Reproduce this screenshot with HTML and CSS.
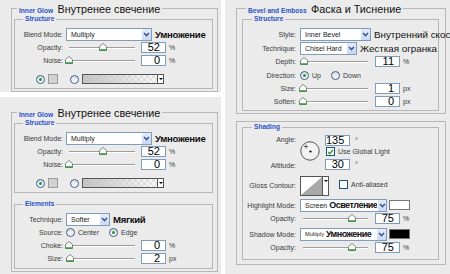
FILE: index.html
```html
<!DOCTYPE html>
<html lang="ru">
<head>
  <meta charset="UTF-8">
  <title>Inner Glow / Bevel and Emboss</title>
  <link rel="stylesheet" href="styles.css">
</head>
<body>
  <div class="sheet">
    <div class="col">

      <!-- Inner Glow, верхняя панель -->
      <section class="panel glow-top">
        <fieldset class="group">
          <legend><span class="title">Inner Glow</span> <span class="ru">Внутренее свечение</span></legend>
          <fieldset class="sub">
            <legend class="title">Structure</legend>
            <div class="row tall first">
              <span class="lbl">Blend Mode:</span>
              <div class="select w86"><span>Multiply</span><i class="arrow"><svg width="9" height="9" viewBox="0 0 9 9"><polyline points="2,3 4.5,5.5 7,3" fill="none" stroke="#3d5a8c" stroke-width="1.6"/></svg></i></div>
              <span class="ru b">Умножение</span>
            </div>
            <div class="row">
              <span class="lbl">Opacity:</span>
              <div class="slider"><i class="thumb" style="left:52%"><svg width="8" height="8" viewBox="0 0 8 8"><path d="M0.5 7.5V3.5L4 0.5L7.5 3.5V7.5Z" fill="#fff" stroke="#808080"/><path d="M0.5 7H7.5" stroke="#2f9a35" stroke-width="1.5"/></svg></i></div>
              <span class="num">52</span><span class="unit">%</span>
            </div>
            <div class="row">
              <span class="lbl">Noise:</span>
              <div class="slider"><i class="thumb" style="left:0%"><svg width="8" height="8" viewBox="0 0 8 8"><path d="M0.5 7.5V3.5L4 0.5L7.5 3.5V7.5Z" fill="#fff" stroke="#808080"/><path d="M0.5 7H7.5" stroke="#2f9a35" stroke-width="1.5"/></svg></i></div>
              <span class="num">0</span><span class="unit">%</span>
            </div>
            <div class="row colors">
              <i class="radio on"></i>
              <i class="swatch"></i>
              <i class="radio"></i>
              <div class="gradient"><i class="drop"></i></div>
            </div>
          </fieldset>
        </fieldset>
      </section>

      <!-- Inner Glow, нижняя панель -->
      <section class="panel glow-bottom">
        <fieldset class="group">
          <legend><span class="title">Inner Glow</span> <span class="ru">Внутренее свечение</span></legend>
          <fieldset class="sub">
            <legend class="title">Structure</legend>
            <div class="row tall first">
              <span class="lbl">Blend Mode:</span>
              <div class="select w86"><span>Multiply</span><i class="arrow"><svg width="9" height="9" viewBox="0 0 9 9"><polyline points="2,3 4.5,5.5 7,3" fill="none" stroke="#3d5a8c" stroke-width="1.6"/></svg></i></div>
              <span class="ru b">Умножение</span>
            </div>
            <div class="row">
              <span class="lbl">Opacity:</span>
              <div class="slider"><i class="thumb" style="left:52%"><svg width="8" height="8" viewBox="0 0 8 8"><path d="M0.5 7.5V3.5L4 0.5L7.5 3.5V7.5Z" fill="#fff" stroke="#808080"/><path d="M0.5 7H7.5" stroke="#2f9a35" stroke-width="1.5"/></svg></i></div>
              <span class="num">52</span><span class="unit">%</span>
            </div>
            <div class="row">
              <span class="lbl">Noise:</span>
              <div class="slider"><i class="thumb" style="left:0%"><svg width="8" height="8" viewBox="0 0 8 8"><path d="M0.5 7.5V3.5L4 0.5L7.5 3.5V7.5Z" fill="#fff" stroke="#808080"/><path d="M0.5 7H7.5" stroke="#2f9a35" stroke-width="1.5"/></svg></i></div>
              <span class="num">0</span><span class="unit">%</span>
            </div>
            <div class="row colors">
              <i class="radio on"></i>
              <i class="swatch"></i>
              <i class="radio"></i>
              <div class="gradient"><i class="drop"></i></div>
            </div>
          </fieldset>
          <fieldset class="sub elements">
            <legend class="title">Elements</legend>
            <div class="row tall first">
              <span class="lbl">Technique:</span>
              <div class="select w44"><span>Softer</span><i class="arrow"><svg width="9" height="9" viewBox="0 0 9 9"><polyline points="2,3 4.5,5.5 7,3" fill="none" stroke="#3d5a8c" stroke-width="1.6"/></svg></i></div>
              <span class="ru b">Мягкий</span>
            </div>
            <div class="row">
              <span class="lbl">Source:</span>
              <i class="radio"></i><span class="opt">Center</span>
              <i class="radio on"></i><span class="opt">Edge</span>
            </div>
            <div class="row">
              <span class="lbl">Choke:</span>
              <div class="slider"><i class="thumb" style="left:0%"><svg width="8" height="8" viewBox="0 0 8 8"><path d="M0.5 7.5V3.5L4 0.5L7.5 3.5V7.5Z" fill="#fff" stroke="#808080"/><path d="M0.5 7H7.5" stroke="#2f9a35" stroke-width="1.5"/></svg></i></div>
              <span class="num">0</span><span class="unit">%</span>
            </div>
            <div class="row">
              <span class="lbl">Size:</span>
              <div class="slider"><i class="thumb" style="left:1%"><svg width="8" height="8" viewBox="0 0 8 8"><path d="M0.5 7.5V3.5L4 0.5L7.5 3.5V7.5Z" fill="#fff" stroke="#808080"/><path d="M0.5 7H7.5" stroke="#2f9a35" stroke-width="1.5"/></svg></i></div>
              <span class="num">2</span><span class="unit">px</span>
            </div>
          </fieldset>
        </fieldset>
      </section>
    </div>

    <!-- Bevel and Emboss -->
    <section class="panel bevel">
      <fieldset class="group">
        <legend><span class="title">Bevel and Emboss</span> <span class="ru">Фаска и Тиснение</span></legend>
        <fieldset class="sub">
          <legend class="title">Structure</legend>
          <div class="row tall first">
            <span class="lbl">Style:</span>
            <div class="select w71"><span>Inner Bevel</span><i class="arrow"><svg width="9" height="9" viewBox="0 0 9 9"><polyline points="2,3 4.5,5.5 7,3" fill="none" stroke="#3d5a8c" stroke-width="1.6"/></svg></i></div>
            <span class="ru s">Внутренний скос</span>
          </div>
          <div class="row tall">
            <span class="lbl">Technique:</span>
            <div class="select w57"><span>Chisel Hard</span><i class="arrow"><svg width="9" height="9" viewBox="0 0 9 9"><polyline points="2,3 4.5,5.5 7,3" fill="none" stroke="#3d5a8c" stroke-width="1.6"/></svg></i></div>
            <span class="ru s">Жесткая огранка</span>
          </div>
          <div class="row">
            <span class="lbl">Depth:</span>
            <div class="slider"><i class="thumb" style="left:1%"><svg width="8" height="8" viewBox="0 0 8 8"><path d="M0.5 7.5V3.5L4 0.5L7.5 3.5V7.5Z" fill="#fff" stroke="#808080"/><path d="M0.5 7H7.5" stroke="#2f9a35" stroke-width="1.5"/></svg></i></div>
            <span class="num">11</span><span class="unit">%</span>
          </div>
          <div class="row tall">
            <span class="lbl">Direction:</span>
            <i class="radio on"></i><span class="opt">Up</span>
            <i class="radio"></i><span class="opt">Down</span>
          </div>
          <div class="row">
            <span class="lbl">Size:</span>
            <div class="slider"><i class="thumb" style="left:0%"><svg width="8" height="8" viewBox="0 0 8 8"><path d="M0.5 7.5V3.5L4 0.5L7.5 3.5V7.5Z" fill="#fff" stroke="#808080"/><path d="M0.5 7H7.5" stroke="#2f9a35" stroke-width="1.5"/></svg></i></div>
            <span class="num">1</span><span class="unit">px</span>
          </div>
          <div class="row">
            <span class="lbl">Soften:</span>
            <div class="slider"><i class="thumb" style="left:0%"><svg width="8" height="8" viewBox="0 0 8 8"><path d="M0.5 7.5V3.5L4 0.5L7.5 3.5V7.5Z" fill="#fff" stroke="#808080"/><path d="M0.5 7H7.5" stroke="#2f9a35" stroke-width="1.5"/></svg></i></div>
            <span class="num">0</span><span class="unit">px</span>
          </div>
        </fieldset>
      </fieldset>

      <fieldset class="group plain">
        <fieldset class="sub">
          <legend class="title">Shading</legend>
          <div class="angle">
            <div class="angle-lbls">
              <span class="lbl">Angle:</span>
              <span class="lbl">Altitude:</span>
            </div>
            <svg class="dial" width="20" height="20" viewBox="0 0 20 20">
              <circle cx="10" cy="10" r="9.2" fill="#f2f2f2" stroke="#555" stroke-width="1"/>
              <circle cx="10.5" cy="10.5" r="1.1" fill="#000"/>
              <path d="M4 5.5H8M6 3.5V7.5" stroke="#444" stroke-width="0.8"/>
            </svg>
            <div class="angle-vals">
              <div class="val"><span class="num">135</span><span class="unit deg">°</span></div>
              <div class="check"><i class="box"><svg width="8" height="8" viewBox="0 0 8 8"><polyline points="1.3,4 3.2,6 6.8,1.5" fill="none" stroke="#21a121" stroke-width="1.6"/></svg></i><span class="opt">Use Global Light</span></div>
              <div class="val"><span class="num">30</span><span class="unit deg">°</span></div>
            </div>
          </div>
          <div class="row contour-row">
            <span class="lbl">Gloss Contour:</span>
            <div class="contour">
              <svg width="21" height="18" viewBox="0 0 21 18"><rect width="21" height="18" fill="#fff"/><polygon points="0,18 21,0 21,18" fill="#a8a8a8"/></svg>
              <i class="drop"></i>
            </div>
            <div class="check aa"><i class="box"></i><span class="opt">Anti-aliased</span></div>
          </div>
          <div class="row tall mode">
            <span class="lbl">Highlight Mode:</span>
            <div class="select w87"><span>Screen</span><span class="ru in">Осветление</span><i class="arrow"><svg width="9" height="9" viewBox="0 0 9 9"><polyline points="2,3 4.5,5.5 7,3" fill="none" stroke="#3d5a8c" stroke-width="1.6"/></svg></i></div>
            <i class="color white"></i>
          </div>
          <div class="row">
            <span class="lbl">Opacity:</span>
            <div class="slider"><i class="thumb" style="left:75%"><svg width="8" height="8" viewBox="0 0 8 8"><path d="M0.5 7.5V3.5L4 0.5L7.5 3.5V7.5Z" fill="#fff" stroke="#808080"/><path d="M0.5 7H7.5" stroke="#2f9a35" stroke-width="1.5"/></svg></i></div>
            <span class="num">75</span><span class="unit">%</span>
          </div>
          <div class="row tall mode">
            <span class="lbl">Shadow Mode:</span>
            <div class="select w87"><span class="tiny">Multiply</span><span class="ru in">Умножение</span><i class="arrow"><svg width="9" height="9" viewBox="0 0 9 9"><polyline points="2,3 4.5,5.5 7,3" fill="none" stroke="#3d5a8c" stroke-width="1.6"/></svg></i></div>
            <i class="color black"></i>
          </div>
          <div class="row">
            <span class="lbl">Opacity:</span>
            <div class="slider"><i class="thumb" style="left:75%"><svg width="8" height="8" viewBox="0 0 8 8"><path d="M0.5 7.5V3.5L4 0.5L7.5 3.5V7.5Z" fill="#fff" stroke="#808080"/><path d="M0.5 7H7.5" stroke="#2f9a35" stroke-width="1.5"/></svg></i></div>
            <span class="num">75</span><span class="unit">%</span>
          </div>
        </fieldset>
      </fieldset>
    </section>
  </div>
</body>
</html>
```

FILE: styles.css
```css
* {
  box-sizing: border-box;
}

body {
  margin: 0;
  background: #fff;
  font-family: "Liberation Sans", Arial, sans-serif;
  color: #3a3a3a;
}

.sheet {
  display: flex;
  gap: 4px;
  width: 450px;
  height: 274px;
}

.col {
  display: flex;
  flex-direction: column;
  gap: 5px;
  width: 221px;
}

.panel {
  background: #ebebeb;
  overflow: hidden;
}

.glow-top {
  height: 92px;
  padding-top: 2px;
}

.glow-bottom {
  height: 177px;
  padding-top: 9px;
}

.bevel {
  width: 225px;
  height: 274px;
  padding-top: 2px;
}

/* рамки групп */
fieldset {
  margin: 0;
  min-width: 0;
  border: 1px solid #b7b7b7;
}

legend {
  padding: 0 2px;
}

.group {
  margin: 0 3px 0 11px;
  padding: 0 4px 2px 2px;
}

.group > legend {
  height: 12px;
  line-height: 12px;
  margin-left: 3px;
  white-space: nowrap;
}

.sub {
  padding: 0 2px 3px 1px;
}

.sub > legend {
  height: 10px;
  line-height: 10px;
  margin-left: 7px;
}

.elements {
  margin-top: 6px;
}

.title {
  color: #2b52c6;
  font-weight: bold;
  font-size: 6.6px;
}

.ru {
  color: #111;
  font-size: 10.8px;
}

.ru.b {
  font-weight: bold;
  font-size: 9.6px;
  letter-spacing: -0.3px;
  margin-left: 3px;
}

.ru.s {
  font-size: 9.8px;
  margin-left: 3px;
  white-space: nowrap;
}

/* строки */
.row {
  display: flex;
  align-items: center;
  height: 13px;
}

.row.tall {
  height: 14px;
}

.row.first {
  margin-top: 3px;
}

.lbl {
  flex: none;
  width: 47px;
  margin-right: 3px;
  text-align: right;
  font-size: 7px;
  white-space: nowrap;
}

.opt {
  font-size: 7px;
  margin: 0 10px 0 3px;
  white-space: nowrap;
}

.select {
  flex: none;
  display: flex;
  align-items: center;
  height: 13px;
  padding-left: 4px;
  border: 1px solid #7f9db9;
  background: #fff;
  font-size: 7px;
  color: #222;
  white-space: nowrap;
  overflow: hidden;
}

.select .arrow {
  flex: none;
  display: flex;
  align-items: center;
  justify-content: center;
  width: 10px;
  height: 11px;
  margin-left: auto;
  background: linear-gradient(#e4ecfb, #c9d8f5);
  border-left: 1px solid #fff;
}

.select .ru.in {
  font-weight: bold;
  font-size: 9px;
  letter-spacing: -0.5px;
  margin-left: 2px;
}

.select .tiny {
  font-size: 5.6px;
}

.w86 { width: 86px; }
.w44 { width: 44px; }
.w71 { width: 71px; }
.w57 { width: 57px; }
.w87 { width: 87px; }

.slider {
  flex: none;
  position: relative;
  width: 66px;
  height: 9px;
  margin-left: 3px;
}

.slider::before {
  content: "";
  position: absolute;
  left: 0;
  right: 0;
  top: 4px;
  height: 1px;
  background: #9d9d9d;
  box-shadow: 0 1px 0 #fff;
}

.thumb {
  position: absolute;
  top: 0;
  width: 8px;
  height: 8px;
  margin-left: -4px;
  display: block;
}

.thumb svg {
  display: block;
}

.num {
  flex: none;
  width: 25px;
  height: 11px;
  margin-left: 6px;
  padding-right: 5px;
  border: 1px solid #7f9db9;
  background: #fff;
  color: #000;
  font-size: 11px;
  line-height: 9px;
  text-align: right;
}

.unit {
  font-size: 7px;
  margin-left: 3px;
}

.unit.deg {
  margin-left: 5px;
}

.radio {
  flex: none;
  position: relative;
  width: 9px;
  height: 9px;
  border-radius: 50%;
  border: 1px solid #3c5d91;
  background: linear-gradient(#dcdcdc, #fff);
}

.radio.on::after {
  content: "";
  position: absolute;
  left: 2px;
  top: 2px;
  width: 3px;
  height: 3px;
  border-radius: 50%;
  background: #1f9c2a;
}

.colors {
  height: 12px;
  margin-top: 6px;
  padding-left: 20px;
}

.swatch {
  width: 10px;
  height: 10px;
  margin-left: 3px;
  border: 1px solid #9a9a9a;
  background: #d2d2d2;
}

.colors .radio {
  margin-left: 12px;
}

.colors .radio:first-child {
  margin-left: 0;
}

.gradient {
  display: flex;
  justify-content: flex-end;
  width: 82px;
  height: 10px;
  margin-left: 3px;
  border: 1px solid #555;
  background:
    linear-gradient(to right, #c4c4c4, rgba(255, 255, 255, 0)),
    repeating-conic-gradient(#e6e6e6 0 25%, #fff 0 50%) 0 0 / 6px 6px;
}

.drop {
  position: relative;
  width: 6px;
  height: 100%;
  background: #fff;
  border-left: 1px solid #555;
}

.drop::after {
  content: "";
  position: absolute;
  left: 1px;
  top: 3px;
  border-left: 2px solid transparent;
  border-right: 2px solid transparent;
  border-top: 2px solid #000;
}

/* Bevel and Emboss */
.bevel .lbl {
  width: 52px;
  margin-right: 4px;
}

.bevel .slider {
  width: 65px;
  margin-left: 3px;
}

.bevel .num {
  margin-left: 7px;
}

.bevel .group {
  margin: 0 4px 0 11px;
  padding: 0 6px 2px 5px;
}

.bevel .group > legend {
  margin-left: 4px;
}

.bevel .sub > legend {
  margin-left: 8px;
}

.bevel .sub {
  padding-bottom: 2px;
}

.group.plain {
  margin-top: 7px;
  padding-bottom: 4px;
}

.group.plain .sub {
  padding-bottom: 5px;
}

.angle {
  display: flex;
  height: 38px;
  padding-top: 3px;
}

.angle-lbls {
  display: flex;
  flex-direction: column;
  justify-content: space-between;
}

.angle-lbls .lbl {
  line-height: 9px;
}

.dial {
  flex: none;
  margin: 6px 0 0 0;
}

.angle-vals {
  display: flex;
  flex-direction: column;
  margin-left: 5px;
}

.val {
  display: flex;
  align-items: center;
}

.angle-vals .num {
  margin-left: 0;
}

.check {
  display: flex;
  align-items: center;
  height: 10px;
  margin: 1px 0 3px 1px;
}

.box {
  flex: none;
  display: flex;
  align-items: center;
  justify-content: center;
  width: 9px;
  height: 9px;
  border: 1px solid #1c5180;
  background: #fff;
}

.check .opt {
  margin-left: 3px;
}

.contour-row {
  height: 20px;
  margin-top: 6px;
  align-items: flex-start;
}

.contour-row .lbl {
  margin-top: 6px;
}

.contour {
  display: flex;
  height: 20px;
  border: 1px solid #555;
  background: #fff;
}

.contour svg {
  display: block;
}

.contour .drop {
  border-left: 1px solid #555;
}

.check.aa {
  margin: 3px 0 0 10px;
}

.mode {
  margin-top: 2px;
}

.color {
  width: 21px;
  height: 10px;
  margin-left: 2px;
  border: 1px solid #777;
}

.color.white {
  background: #fff;
}

.color.black {
  background: #000;
}
```
